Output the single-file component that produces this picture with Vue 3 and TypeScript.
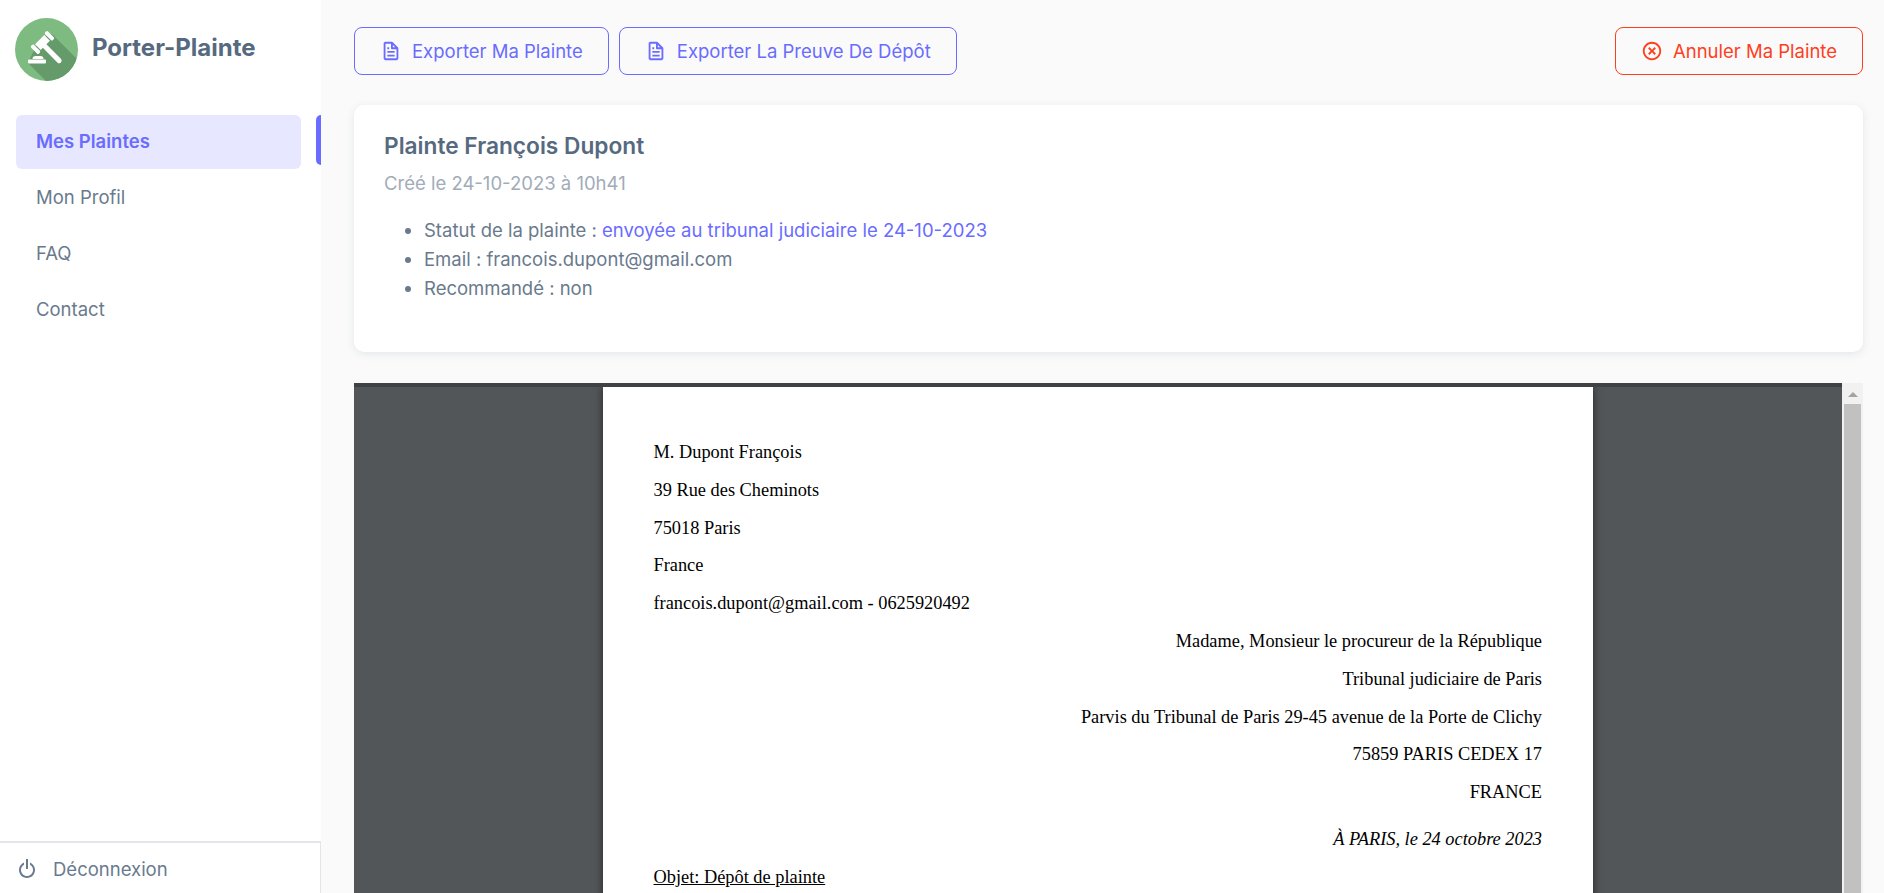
<template>
  <div class="layout">
    <aside class="sidebar">
      <div class="brand">
        <svg class="brand-logo" viewBox="0 0 63 63" xmlns="http://www.w3.org/2000/svg">
          <defs>
            <clipPath id="logo-clip"><circle cx="31.5" cy="31.5" r="31.5" /></clipPath>
          </defs>
          <circle cx="31.5" cy="31.5" r="31.5" fill="#7dbb80" />
          <path clip-path="url(#logo-clip)" d="M13 45 L20 30 L34 15 L38 17 L70 49 L70 70 L38 70 Z" fill="#659a6a" />
          <g fill="#fff">
            <rect x="13" y="41.5" width="18" height="4" rx="1" />
            <path d="M17.500 41c0-2 1-3 3-3h5c2 0 3 1 3 3z" />
            <rect x="25" y="24" width="5" height="28" rx="2.500" transform="rotate(-45 27.500 26)" />
            <rect x="23.500" y="18" width="8" height="13" transform="rotate(45 27.500 24.500)" />
            <rect x="15" y="29.200" width="11" height="4" rx="1.500" transform="rotate(45 20.500 31.200)" />
            <rect x="29" y="15.800" width="11" height="4" rx="1.500" transform="rotate(45 34.500 17.800)" />
          </g>
        </svg>
        <span class="brand-name">Porter-Plainte</span>
      </div>

      <nav class="menu">
        <a v-for="item in menuItems" :key="item.label" class="menu-item" :class="{ active: item.active }">
          {{ item.label }}
        </a>
      </nav>

      <div class="logout">
        <svg class="logout-icon" viewBox="0 0 24 24" xmlns="http://www.w3.org/2000/svg">
          <path d="M12 21c4.411 0 8-3.589 8-8 0-3.350-2.072-6.221-5-7.411v2.223A6 6 0 0 1 18 13c0 3.309-2.691 6-6 6s-6-2.691-6-6a5.999 5.999 0 0 1 3-5.188V5.589C6.072 6.779 4 9.650 4 13c0 4.411 3.589 8 8 8z" />
          <path d="M11 2h2v10h-2z" />
        </svg>
        <span>Déconnexion</span>
      </div>
    </aside>

    <main class="content">
      <div class="actions">
        <button v-for="label in exportLabels" :key="label" class="btn btn-primary">
          <svg class="btn-icon" viewBox="0 0 24 24" xmlns="http://www.w3.org/2000/svg">
            <path d="M19.903 8.586a.997.997 0 0 0-.196-.293l-6-6a.997.997 0 0 0-.293-.196c-.03-.014-.062-.022-.094-.033a.991.991 0 0 0-.259-.051C13.040 2.011 13.021 2 13 2H6c-1.103 0-2 .897-2 2v16c0 1.103.897 2 2 2h12c1.103 0 2-.897 2-2V9c0-.021-.011-.04-.013-.062a.952.952 0 0 0-.051-.259c-.01-.032-.019-.063-.033-.093zM16.586 8H14V5.414L16.586 8zM6 20V4h6v5a1 1 0 0 0 1 1h5l.002 10H6z" />
            <path d="M8 12h8v2H8zm0 4h8v2H8zm0-8h2v2H8z" />
          </svg>
          {{ label }}
        </button>
        <button class="btn btn-danger">
          <svg class="btn-icon" viewBox="0 0 24 24" xmlns="http://www.w3.org/2000/svg">
            <path d="M9.172 16.242 12 13.414l2.828 2.828 1.414-1.414L13.414 12l2.828-2.828-1.414-1.414L12 10.586 9.172 7.758 7.758 9.172 10.586 12l-2.828 2.828z" />
            <path d="M12 22c5.514 0 10-4.486 10-10S17.514 2 12 2 2 6.486 2 12s4.486 10 10 10zm0-18c4.411 0 8 3.589 8 8s-3.589 8-8 8-8-3.589-8-8 3.589-8 8-8z" />
          </svg>
          Annuler Ma Plainte
        </button>
      </div>

      <section class="card">
        <h2 class="card-title">Plainte François Dupont</h2>
        <p class="card-date">Créé le 24-10-2023 à 10h41</p>
        <ul class="card-list">
          <li>Statut de la plainte : <span class="status">envoyée au tribunal judiciaire le 24-10-2023</span></li>
          <li>Email : francois.dupont@gmail.com</li>
          <li>Recommandé : non</li>
        </ul>
      </section>

      <section class="viewer">
        <div class="viewer-doc">
          <div class="page">
            <p v-for="line in senderLines" :key="line">{{ line }}</p>
            <p v-for="line in recipientLines" :key="line" class="right">{{ line }}</p>
            <p class="right date-line">À PARIS, le 24 octobre 2023</p>
            <p class="subject">Objet: Dépôt de plainte</p>
          </div>
        </div>
        <div class="scrollbar">
          <span class="scroll-arrow"></span>
          <span class="scroll-thumb"></span>
        </div>
      </section>
    </main>
  </div>
</template>

<script setup lang="ts">
const menuItems = [
  { label: 'Mes Plaintes', active: true },
  { label: 'Mon Profil', active: false },
  { label: 'FAQ', active: false },
  { label: 'Contact', active: false }
]

const exportLabels = ['Exporter Ma Plainte', 'Exporter La Preuve De Dépôt']

const senderLines = [
  'M. Dupont François',
  '39 Rue des Cheminots',
  '75018 Paris',
  'France',
  'francois.dupont@gmail.com - 0625920492'
]

const recipientLines = [
  'Madame, Monsieur le procureur de la République',
  'Tribunal judiciaire de Paris',
  'Parvis du Tribunal de Paris 29-45 avenue de la Porte de Clichy',
  '75859 PARIS CEDEX 17',
  'FRANCE'
]
</script>

<style>
html,
body {
  margin: 0;
  height: 100%;
  overflow: hidden;
  background: #fafafa;
}
</style>

<style scoped>
.layout {
  display: flex;
  height: 893px;
  overflow: hidden;
  font-family: Inter, Roboto, sans-serif;
  font-size: 18.5px;
  color: #697a8d;
  background: #fafafa;
}

.sidebar {
  width: 321px;
  flex-shrink: 0;
  display: flex;
  flex-direction: column;
  background: #fff;
}

.brand {
  display: flex;
  align-items: center;
  gap: 14px;
  padding: 18px 0 0 15px;
  height: 63px;
}

.brand-logo {
  width: 63px;
  height: 63px;
  flex-shrink: 0;
}

.brand-name {
  font-size: 24px;
  font-weight: 700;
  color: #566a7f;
  position: relative;
  top: -2px;
}

.menu {
  display: flex;
  flex-direction: column;
  gap: 2px;
  margin-top: 34px;
  flex: 1;
}

.menu-item {
  position: relative;
  display: flex;
  align-items: center;
  height: 54px;
  margin: 0 20px 0 16px;
  padding: 0 0 2px 20px;
  box-sizing: border-box;
  border-radius: 6px;
  color: #697a8d;
}

.menu-item.active {
  background: #e7e7ff;
  color: #696cff;
  font-weight: 600;
}

.menu-item.active::after {
  content: '';
  position: absolute;
  top: 0;
  right: -20px;
  width: 5px;
  height: 50px;
  border-radius: 6px 0 0 6px;
  background: #696cff;
}

.logout {
  display: flex;
  align-items: center;
  gap: 14px;
  height: 52px;
  padding: 1px 0 0 15px;
  box-sizing: border-box;
  border-top: 2px solid #e2e5e9;
  border-right: 1px solid #e2e5e9;
}

.logout-icon {
  width: 24px;
  height: 24px;
  fill: #697a8d;
}

.content {
  flex: 1;
  min-width: 0;
  display: flex;
  flex-direction: column;
  padding: 27px 21px 0 33px;
}

.actions {
  display: flex;
  gap: 10px;
}

.btn {
  display: inline-flex;
  align-items: center;
  gap: 10px;
  height: 48px;
  padding: 0 25px;
  border-radius: 8px;
  border: 1px solid;
  background: transparent;
  font-family: inherit;
  font-size: 18.5px;
}

.btn-primary {
  color: #696cff;
  border-color: #696cff;
}

.btn-danger {
  color: #ff3e1d;
  border-color: #ff3e1d;
  margin-left: auto;
}

.btn-icon {
  width: 22px;
  height: 22px;
  fill: currentColor;
}

.card {
  margin-top: 30px;
  height: 247px;
  box-sizing: border-box;
  padding: 27px 30px;
  border-radius: 10px;
  background: #fff;
  box-shadow: 0 2px 8px rgba(67, 89, 113, 0.12);
}

.card-title {
  margin: 0;
  font-size: 22.7px;
  line-height: 28px;
  font-weight: 600;
  color: #566a7f;
}

.card-date {
  margin: 9px 0 0;
  line-height: 28px;
  color: #a1acb8;
}

.card-list {
  margin: 19px 0 0;
  padding-left: 40px;
  line-height: 29px;
}

.status {
  color: #696cff;
}

.viewer {
  flex: 1;
  min-height: 0;
  display: flex;
  margin-top: 31px;
  background: #525659;
}

.viewer-doc {
  flex: 1;
  min-width: 0;
  display: flex;
  justify-content: center;
  overflow: hidden;
  border-top: 4px solid #3f4245;
}

.page {
  width: 990px;
  height: 1400px;
  box-sizing: border-box;
  padding: 47px 51px 0 50.5px;
  background: #fff;
  box-shadow: 0 0 8px rgba(0, 0, 0, 0.55);
  font-family: 'Liberation Serif', serif;
  font-size: 18.35px;
  line-height: 37.800px;
  color: #000;
}

.page p {
  margin: 0;
}

.page .right {
  text-align: right;
}

.page .date-line {
  margin-top: 9px;
  font-style: italic;
}

.page .subject {
  text-decoration: underline;
}

.scrollbar {
  width: 21px;
  flex-shrink: 0;
  display: flex;
  flex-direction: column;
  align-items: center;
  background: #f1f1f1;
}

.scroll-arrow {
  margin-top: 9px;
  border-left: 5px solid transparent;
  border-right: 5px solid transparent;
  border-bottom: 5px solid #a3a3a3;
}

.scroll-thumb {
  flex: 1;
  width: 17px;
  margin-top: 7px;
  background: #c1c1c1;
}
</style>
